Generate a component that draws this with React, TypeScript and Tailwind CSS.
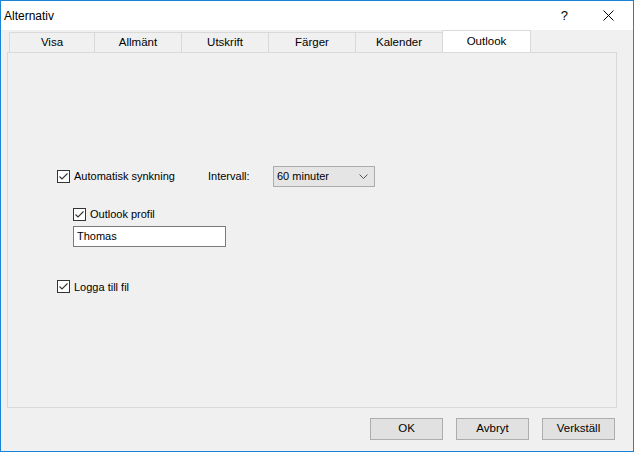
import React from 'react';

const tabs = ['Visa', 'Allmänt', 'Utskrift', 'Färger', 'Kalender'];
const tabWidths = ['w-[86px]', 'w-[87px]', 'w-[87px]', 'w-[87px]', 'w-[87px]'];

function CheckBox({ label }: { label: string }) {
  return (
    <label className="flex items-center gap-[4px]">
      <span className="w-[13px] h-[13px] border border-[#333333] bg-white flex items-center justify-center">
        <svg width="11" height="11" viewBox="0 0 11 11">
          <path d="M1.5 5.5 L4 8 L9.5 2.5" fill="none" stroke="#333333" strokeWidth="1.1" />
        </svg>
      </span>
      <span>{label}</span>
    </label>
  );
}

function DialogButton({ label }: { label: string }) {
  return (
    <button className="w-[73px] h-[22px] bg-[#e1e1e1] border border-[#adadad] text-[#000000]">
      {label}
    </button>
  );
}

export default function App() {
  return (
    <div
      className="w-[634px] h-[452px] border border-[#1883d7] bg-[#f0f0f0] flex flex-col text-[11.5px] text-black"
      style={{ fontFamily: '"Liberation Sans", Arial, sans-serif' }}
    >
      {/* title bar */}
      <div className="h-[29px] bg-white flex items-center text-[12px]">
        <span className="pl-[3px]">Alternativ</span>
        <span className="ml-auto mr-[35px] text-[13px]">?</span>
        <svg width="11" height="11" viewBox="0 0 11 11" className="mr-[19px]">
          <path d="M0.5 0.5 L10.5 10.5 M10.5 0.5 L0.5 10.5" stroke="#000" strokeWidth="1" />
        </svg>
      </div>

      {/* tabs */}
      <div className="h-[22px] flex items-end pl-[8px]">
        {tabs.map((t, i) => (
          <div
            key={t}
            className={`${tabWidths[i]} h-[20px] border-t border-r border-[#d9d9d9] ${i === 0 ? 'border-l' : ''} flex items-center justify-center`}
          >
            {t}
          </div>
        ))}
        <div className="w-[89px] h-[22px] bg-white border-t border-x border-[#d9d9d9] -ml-px flex items-center justify-center">
          Outlook
        </div>
      </div>

      {/* panel */}
      <div className="ml-[6px] w-[610px] h-[356px] border border-[#d9d9d9] bg-[#f0f0f0] flex flex-col pl-[49px] pt-[117px] text-[11px]">
        <div className="flex items-center h-[13px]">
          <div className="w-[151px]">
            <CheckBox label="Automatisk synkning" />
          </div>
          <span className="w-[65px]">Intervall:</span>
          <div className="w-[102px] h-[21px] bg-[#e5e5e5] border border-[#acacac] flex items-center pl-[3px] pr-[6px]">
            <span>60 minuter</span>
            <svg width="9" height="5" viewBox="0 0 9 5" className="ml-auto">
              <path d="M0.5 0.5 L4.5 4.5 L8.5 0.5" fill="none" stroke="#555" strokeWidth="1" />
            </svg>
          </div>
        </div>

        <div className="pl-[16px] mt-[23px] flex flex-col">
          <CheckBox label="Outlook profil" />
          <div className="mt-[3px] w-[153px] h-[21px] bg-white border border-[#7a7a7a] flex items-center pl-[3px]">
            Thomas
          </div>
        </div>

        <div className="mt-[32px]">
          <CheckBox label="Logga till fil" />
        </div>
      </div>

      {/* buttons */}
      <div className="flex pl-[369px] pt-[10px] gap-[13px]">
        <DialogButton label="OK" />
        <DialogButton label="Avbryt" />
        <DialogButton label="Verkställ" />
      </div>
    </div>
  );
}
